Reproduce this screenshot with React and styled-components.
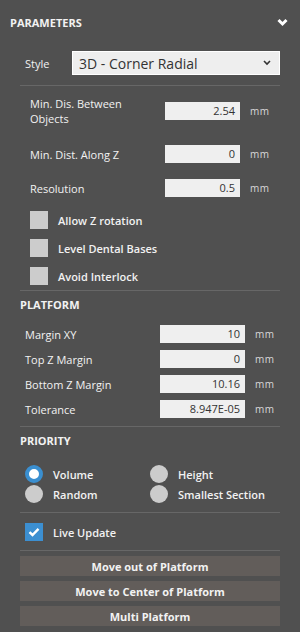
import React, { useState } from "react";
import styled, { createGlobalStyle } from "styled-components";

const GlobalStyle = createGlobalStyle`
  html, body {
    margin: 0;
    padding: 0;
    background: #505050;
  }
  body {
    font-family: "Open Sans", "Liberation Sans", sans-serif;
    color: #f2f2f2;
  }
`;

const Panel = styled.div`
  width: 300px;
  height: 632px;
  background: #505050;
  padding: 0 20px;
  box-sizing: border-box;
  overflow: hidden;
`;

const Header = styled.div`
  display: flex;
  align-items: center;
  justify-content: space-between;
  height: 44px;
  margin: 0 -10px;
  padding-right: 2px;
  font-size: 11px;
  font-weight: 700;
`;

const StyleRow = styled.div`
  display: flex;
  align-items: center;
  height: 24px;
  margin-top: 7px;
  padding-left: 5px;
  font-size: 11px;
`;

const StyleLabel = styled.span`
  width: 47px;
`;

const Select = styled.div`
  flex: 1;
  height: 24px;
  background: #eeeeee;
  border: 1px solid #ffffff;
  box-sizing: border-box;
  color: #333;
  font-size: 14px;
  display: flex;
  align-items: center;
  justify-content: space-between;
  padding: 0 8px 0 6px;
`;

const Divider = styled.div`
  height: 1px;
  background: #676767;
  margin: ${(p) => p.$m || "0"};
`;

const ParamRow = styled.div`
  display: flex;
  align-items: center;
  height: ${(p) => p.$h || "18px"};
  margin-top: ${(p) => p.$mt || "0"};
  padding-left: ${(p) => p.$pl || "10px"};
  font-size: 11px;
  line-height: 15px;
`;

const ParamLabel = styled.div`
  width: ${(p) => p.$w};
`;

const NumInput = styled.div`
  width: ${(p) => p.$w};
  height: 18px;
  background: #efefef;
  color: #333;
  text-align: right;
  font-size: 11px;
  line-height: 18px;
  padding-right: 5px;
  box-sizing: border-box;
`;

const Unit = styled.span`
  margin-left: 10px;
  font-size: 10px;
  color: #d8d8d8;
  letter-spacing: 0.5px;
`;

const CheckList = styled.div`
  display: flex;
  flex-direction: column;
  gap: 10px;
  margin-top: 14px;
  padding-left: 10px;
`;

const CheckRow = styled.div`
  display: flex;
  align-items: center;
  gap: 10px;
  font-size: 11px;
  font-weight: 600;
  margin-top: ${(p) => p.$mt || "0"};
  padding-left: ${(p) => p.$pl || "0"};
`;

const Box = styled.div`
  width: 18px;
  height: 18px;
  background: ${(p) => (p.$on ? "#3c8fd1" : "#cccccc")};
  display: flex;
  align-items: center;
  justify-content: center;
`;

const SectionTitle = styled.div`
  font-size: 11px;
  font-weight: 700;
  height: 28px;
  line-height: 28px;
`;

const RadioGrid = styled.div`
  display: grid;
  grid-template-columns: 125px 1fr;
  row-gap: 2px;
  margin-top: 10px;
  padding-left: 5px;
`;

const RadioItem = styled.div`
  display: flex;
  align-items: center;
  gap: 10px;
  font-size: 11px;
  font-weight: 600;
  height: 18px;
`;

const RadioDot = styled.div`
  width: 18px;
  height: 18px;
  border-radius: 50%;
  background: ${(p) => (p.$on ? "#ffffff" : "#cccccc")};
  box-sizing: border-box;
  border: ${(p) => (p.$on ? "4px solid #3a8fd0" : "none")};
`;

const Button = styled.div`
  height: 20px;
  background: #625d5a;
  color: #f2f2f2;
  font-size: 11px;
  font-weight: 700;
  display: flex;
  align-items: center;
  justify-content: center;
`;

const ButtonStack = styled.div`
  display: flex;
  flex-direction: column;
  gap: 5px;
  margin-top: 5px;
`;

function Check() {
  return (
    <svg width="12" height="10" viewBox="0 0 12 10">
      <path d="M1.5 5.2 L4.5 8 L10.5 1.8" stroke="#fff" strokeWidth="2.4" fill="none" />
    </svg>
  );
}

export default function App() {
  const [priority, setPriority] = useState("Volume");

  return (
    <>
      <GlobalStyle />
      <Panel>
        <Header>
          <span>PARAMETERS</span>
          <svg width="11" height="9" viewBox="0 0 11 9">
            <path d="M1.5 2 L5.5 6 L9.5 2" stroke="#fff" strokeWidth="3" fill="none" />
          </svg>
        </Header>

        <StyleRow>
          <StyleLabel>Style</StyleLabel>
          <Select>
            <span>3D - Corner Radial</span>
            <svg width="8" height="6" viewBox="0 0 8 6">
              <path d="M1 1 L4 4 L7 1" stroke="#333" strokeWidth="1.6" fill="none" />
            </svg>
          </Select>
        </StyleRow>

        <Divider $m="10px 0 0" />

        <ParamRow $mt="16px" $h="18px">
          <ParamLabel $w="135px">Min. Dis. Between<br />Objects</ParamLabel>
          <NumInput $w="75px">2.54</NumInput>
          <Unit>mm</Unit>
        </ParamRow>
        <ParamRow $mt="25px">
          <ParamLabel $w="135px">Min. Dist. Along Z</ParamLabel>
          <NumInput $w="75px">0</NumInput>
          <Unit>mm</Unit>
        </ParamRow>
        <ParamRow $mt="16px">
          <ParamLabel $w="135px">Resolution</ParamLabel>
          <NumInput $w="75px">0.5</NumInput>
          <Unit>mm</Unit>
        </ParamRow>

        <CheckList>
          <CheckRow><Box />Allow Z rotation</CheckRow>
          <CheckRow><Box />Level Dental Bases</CheckRow>
          <CheckRow><Box />Avoid Interlock</CheckRow>
        </CheckList>

        <Divider $m="5px 0 0" />
        <SectionTitle>PLATFORM</SectionTitle>

        <ParamRow $mt="6px" $pl="5px">
          <ParamLabel $w="135px">Margin XY</ParamLabel>
          <NumInput $w="85px">10</NumInput>
          <Unit>mm</Unit>
        </ParamRow>
        <ParamRow $mt="7px" $pl="5px">
          <ParamLabel $w="135px">Top Z Margin</ParamLabel>
          <NumInput $w="85px">0</NumInput>
          <Unit>mm</Unit>
        </ParamRow>
        <ParamRow $mt="7px" $pl="5px">
          <ParamLabel $w="135px">Bottom Z Margin</ParamLabel>
          <NumInput $w="85px">10.16</NumInput>
          <Unit>mm</Unit>
        </ParamRow>
        <ParamRow $mt="7px" $pl="5px">
          <ParamLabel $w="135px">Tolerance</ParamLabel>
          <NumInput $w="85px">8.947E-05</NumInput>
          <Unit>mm</Unit>
        </ParamRow>

        <Divider $m="8px 0 0" />
        <SectionTitle>PRIORITY</SectionTitle>

        <RadioGrid>
          {["Volume", "Height", "Random", "Smallest Section"].map((p) => (
            <RadioItem key={p} onClick={() => setPriority(p)}>
              <RadioDot $on={priority === p} />
              {p}
            </RadioItem>
          ))}
        </RadioGrid>

        <Divider $m="9px 0 0" />

        <CheckRow $mt="10px" $pl="5px">
          <Box $on><Check /></Box>
          Live Update
        </CheckRow>

        <Divider $m="9px 0 0" />

        <ButtonStack>
          <Button>Move out of Platform</Button>
          <Button>Move to Center of Platform</Button>
          <Button>Multi Platform</Button>
        </ButtonStack>
      </Panel>
    </>
  );
}
